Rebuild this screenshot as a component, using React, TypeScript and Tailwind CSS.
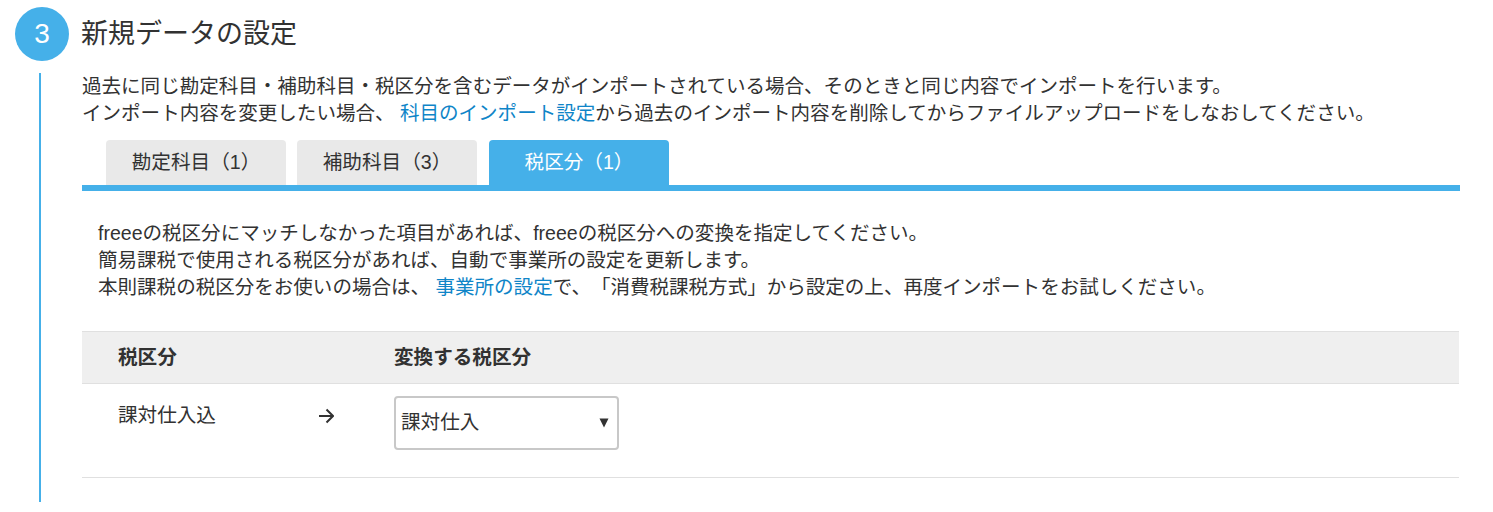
const font = { fontFamily: '"Liberation Sans", "Noto Sans CJK JP", sans-serif' };

function Tab({ label, active }: { label: string; active?: boolean }) {
  return (
    <div
      className={
        active
          ? "ml-px flex h-[45px] w-[180px] items-center justify-center rounded-t-[4px] bg-[#45b0e9] text-[19.6px] text-white"
          : "flex h-[45px] w-[180px] items-center justify-center rounded-t-[4px] bg-[#e9e9e9] text-[19.6px] text-[#323232]"
      }
    >
      {label}
    </div>
  );
}

export default function App() {
  return (
    <div className="h-[512px] w-[1493px] overflow-hidden bg-white text-[#323232] [text-spacing-trim:space-all]" style={font}>
      {/* Step header */}
      <div className="flex items-center gap-3 pl-[15px] pt-[7px]">
        <div className="flex h-[54px] w-[54px] items-center justify-center rounded-full bg-[#45b0e9] text-[28px] text-white">
          3
        </div>
        <h2 className="text-[27px] font-normal leading-[54px]">新規データの設定</h2>
      </div>

      <div className="ml-[39px] mt-[12px] h-[429px] border-l-2 border-[#45b0e9] pl-[41px] pr-[33px]">
        <p className="text-[19.55px] leading-[27px]">
          過去に同じ勘定科目・補助科目・税区分を含むデータがインポートされている場合、そのときと同じ内容でインポートを行います。
          <br />
          インポート内容を変更したい場合、 <span className="text-[#0f85c8]">科目のインポート設定</span>
          から過去のインポート内容を削除してからファイルアップロードをしなおしてください。
        </p>

        {/* Tabs */}
        <div className="mt-[13px] flex gap-[11px] border-b-[6px] border-[#45b0e9] pl-[24px]">
          <Tab label="勘定科目（1）" />
          <Tab label="補助科目（3）" />
          <Tab label="税区分（1）" active />
        </div>

        <p className="pl-[16px] pt-[29px] text-[19.55px] leading-[27px]">
          freeeの税区分にマッチしなかった項目があれば、freeeの税区分への変換を指定してください。
          <br />
          簡易課税で使用される税区分があれば、自動で事業所の設定を更新します。
          <br />
          本則課税の税区分をお使いの場合は、 <span className="text-[#0f85c8]">事業所の設定</span>
          で、「消費税課税方式」から設定の上、再度インポートをお試しください。
        </p>

        {/* Table */}
        <div className="mt-[30px] w-[1377px]">
          <div className="flex h-[53px] items-center border-y border-[#e0e0e0] bg-[#efefef] text-[19.6px] font-bold">
            <div className="w-[312px] pl-[36px]">税区分</div>
            <div>変換する税区分</div>
          </div>
          <div className="flex h-[94px] border-b border-[#e0e0e0] text-[19.6px]">
            <div className="w-[312px] pl-[36px] pt-[17px]">課対仕入込</div>
            <div className="-ml-[76px] mr-[60px] pt-[24px]">
              <svg width="16" height="16" viewBox="0 0 16 16" fill="none" stroke="#323232" strokeWidth="2">
                <path d="M1 8h14M8.500 1.500 15 8l-6.500 6.500" />
              </svg>
            </div>
            <div className="mt-[12px] flex h-[54px] w-[225px] items-center justify-between rounded-[4px] border-2 border-[#c8c8c8] pb-[1px] pl-[5px] pr-[8px]">
              <span className="text-[19.6px]">課対仕入</span>
              <svg width="10" height="10" viewBox="0 0 10 10" fill="#323232">
                <path d="M0.500 0.500h9L5 9.500z" />
              </svg>
            </div>
          </div>
        </div>
      </div>
    </div>
  );
}
